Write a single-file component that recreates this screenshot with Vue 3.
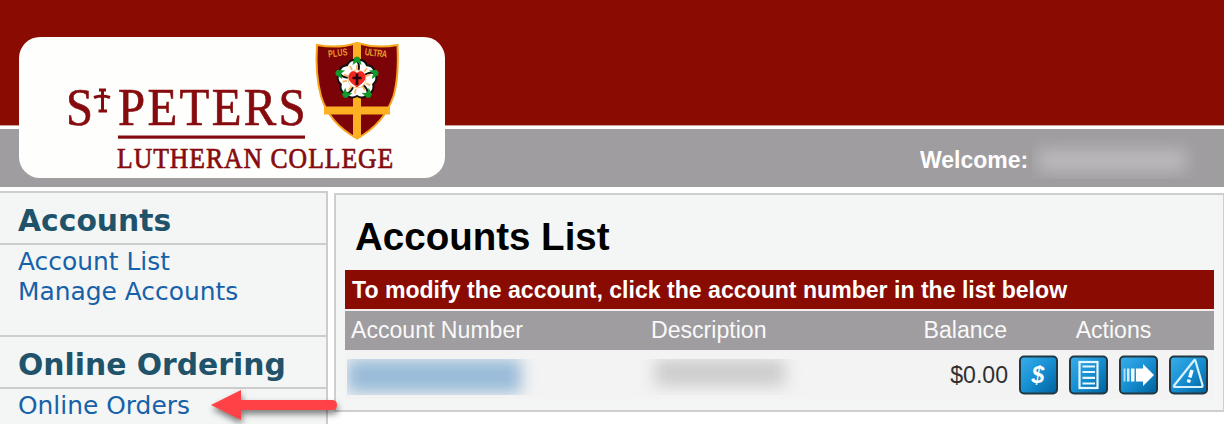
<script setup>
const sections = [
  { title: 'Accounts', links: ['Account List', 'Manage Accounts'] },
  { title: 'Online Ordering', links: ['Online Orders'] },
]
const actions = ['pay', 'statement', 'transfer', 'alert']
const petals = [0, 72, 144, 216, 288]
</script>

<template>
  <div class="page">
    <header class="header">
      <div class="band-red"></div>
      <div class="band-grey">
        <span class="welcome">Welcome:</span>
        <span class="redacted user"><i></i></span>
      </div>
      <div class="logo">
        <svg width="427" height="142" viewBox="19 37 427 142">
          <g class="brand">
            <text x="66" y="125" font-size="53" textLength="27" lengthAdjust="spacingAndGlyphs">S</text>
            <text transform="translate(118 125) scale(.92 1)" font-size="53" textLength="204">PETERS</text>
            <text transform="translate(117 167.500) scale(.9 1)" font-size="28.500" textLength="307">LUTHERAN COLLEGE</text>
          </g>
          <path d="M102.500 90V111M94 97.500Q102 94.500 110 97.500M99 90H106M98.500 111H107" fill="none" stroke="#860b0e" stroke-width="3" />
          <rect x="118" y="135.500" width="187" height="3.200" fill="#860b0e" />
          <path d="M317 45Q339 49 357 43Q377 49 397.500 45Q399 77 393.500 96Q384 124 357 138.500Q329 123 321 96Q315 74 317 45Z" fill="#7c0307" stroke="#f6a51d" stroke-width="2" />
          <path d="M357 43V138M324 110.500H390" stroke="#fcb022" stroke-width="8" />
          <text class="motto" transform="translate(328.500 57.500) rotate(-7) scale(.72 1)" font-size="10" textLength="27">PLUS</text>
          <text class="motto" transform="translate(364.500 55) rotate(7) scale(.72 1)" font-size="10" textLength="31">ULTRA</text>
          <g transform="translate(357 79)">
            <g v-for="a in petals" :key="'l' + a" :transform="`rotate(${a})`">
              <path d="M-4.500-15L-3-21Q0-24 3-21L4.500-15Z" fill="#11992c" />
            </g>
            <g v-for="a in petals" :key="a" :transform="`rotate(${a + 36})`">
              <path d="M0-3C-9-6-13-13-9-17Q-5-20 0-17Q5-20 9-17C13-13 9-6 0-3Z" fill="#fff" stroke="#111" stroke-width="2" />
            </g>
            <g v-for="a in petals" :key="'v' + a" :transform="`rotate(${a})`">
              <path d="M-4.500-14L-3-20Q0-22 3-20L4.500-14L0-17Z" fill="#11992c" />
              <path d="M0-9V-14M-5-9L-7-13" stroke="#f5b865" stroke-width="1.800" />
            </g>
            <circle r="9" fill="#fff" stroke="#f5c98a" />
            <path d="M0 8.500C-4 5-8.500 3-8.500-2C-8-8-2-9 0-6C2-9 8-8 8.500-2C8.500 3 4 5 0 8.500Z" fill="#f32622" />
            <path d="M0-5.500V6M-4.500-1H4.500" stroke="#24070a" stroke-width="2.700" />
          </g>
        </svg>
      </div>
    </header>

    <div class="body">
      <nav class="sidebar">
        <section v-for="s in sections" :key="s.title" class="section">
          <h2>{{ s.title }}</h2>
          <ul>
            <li v-for="l in s.links" :key="l"><a>{{ l }}</a></li>
          </ul>
        </section>
      </nav>

      <main class="panel">
        <h1>Accounts List</h1>
        <div class="notice"><span>To modify the account, click the account number in the list below</span></div>
        <div class="row head">
          <span>Account Number</span>
          <span>Description</span>
          <span class="right">Balance</span>
          <span class="center">Actions</span>
        </div>
        <div class="row entry">
          <span class="redacted number"><i></i></span>
          <span class="redacted desc"><i></i></span>
          <span class="right balance">$0.00</span>
          <div class="actions">
            <svg v-for="a in actions" :key="a" width="39" height="40" viewBox="0 0 39 40">
              <defs>
                <linearGradient :id="'g-' + a" x1="0" y1="0" x2="1" y2="1">
                  <stop offset="0" stop-color="#3aaeea" />
                  <stop offset=".5" stop-color="#168fd2" />
                  <stop offset="1" stop-color="#00609c" />
                </linearGradient>
              </defs>
              <rect x="1" y="1.500" width="37" height="37" rx="4" :fill="`url(#g-${a})`" stroke="#213843" stroke-width="2" />
              <text v-if="a === 'pay'" class="dollar" x="12.500" y="27.500" font-size="23">$</text>
              <g v-else-if="a === 'statement'" fill="none" stroke="#e8f7ff">
                <rect x="10.500" y="7" width="18" height="26" stroke-width="2.200" />
                <path d="M13.500 11.500H26M13.500 17H26M13.500 22.800H26M13.500 28.500H26" stroke-width="2.200" />
              </g>
              <g v-else-if="a === 'transfer'" fill="#fff">
                <path d="M17 13.500H24V9L35 20L24 31V26.500H17Z" />
                <path d="M12 13.500H15.500V26.500H12Z" opacity=".95" />
                <path d="M8 13.500H10.500V26.500H8Z" opacity=".8" />
                <path d="M4.500 13.500H6.500V26.500H4.500Z" opacity=".65" />
              </g>
              <g v-else fill="none" stroke="#d9f1fd">
                <path d="M25 5.500Q26 4 26.500 6L33.500 30Q34 32 32 32H6Q4 32 5.500 30Z" stroke-width="2.200" />
                <path d="M23 15L20.800 22.500" stroke="#fff" stroke-width="3.500" />
                <path d="M20.200 24.500L19.400 27.500" stroke="#fff" stroke-width="3.500" />
              </g>
            </svg>
          </div>
        </div>
      </main>
    </div>

    <svg class="pointer" width="140" height="50" viewBox="206 382 140 50">
      <path d="M211 405L241 390V400H332Q337 400 337 405T332 410H241V420Z" fill="#ff4245" />
    </svg>
  </div>
</template>

<style>
body { margin: 0; background: #fff; }
</style>

<style scoped>
.page {
  position: relative;
  width: 1226px;
  height: 424px;
  overflow: hidden;
  background: #fff;
  font-family: "Liberation Sans", Arial, sans-serif;
}
.header { position: relative; width: 1224px; }
.band-red { height: 125px; background: #8a0b02; border-bottom: 1px solid #cf9c98; }
.band-grey {
  display: flex;
  margin-top: 3px;
  height: 58px;
  box-sizing: border-box;
  padding-left: 920px;
  background: #a09da0;
}
.welcome { font-size: 23px; font-weight: bold; color: #fff; line-height: 62px; width: 112px; white-space: nowrap; }
.logo {
  position: absolute;
  left: 19px;
  top: 37px;
  width: 426px;
  height: 141px;
  border-radius: 21px;
  background: #fefefc;
}
.logo svg { display: block; }
.brand { fill: #860b0e; stroke: #860b0e; stroke-width: .7px; font-family: "Liberation Serif", serif; }
.motto { fill: #e99b28; font-family: "Liberation Sans", sans-serif; font-weight: bold; }

.redacted { display: flex; overflow: hidden; }
.redacted i { filter: blur(8px); }
.user { width: 168px; height: 43px; margin-top: 7px; padding: 13px 0 0 6px; box-sizing: border-box; }
.user i { height: 23px; width: 148px; background: #bbb9bb; }

.body { display: flex; align-items: flex-start; margin-top: 4px; }
.sidebar {
  width: 326px;
  height: 240px;
  border-right: 2px solid #ccc;
  background: #f4f6f6;
}
.section { border-top: 2px solid #cdcdcd; height: 142px; }
h2 {
  margin: 0;
  height: 50px;
  border-bottom: 2px solid #cdcdcd;
  padding-left: 18px;
  font: bold 29.8px/56px "DejaVu Sans", Verdana, sans-serif;
  color: #205369;
}
ul { list-style: none; margin: 0; padding: 2px 0 0 18px; }
li { font: 24.9px/30px "DejaVu Sans", Verdana, sans-serif; color: #1761a9; }

.panel {
  width: 887px;
  height: 215px;
  margin: 2px 0 0 6px;
  border: 2px solid #cecece;
  border-right-width: 1px;
  border-bottom-color: #cfcfcf;
  background: #f4f6f6;
  box-sizing: content-box;
}
h1 { margin: 0; height: 75px; padding-left: 19px; font-size: 38.5px; line-height: 84px; color: #000; }
.notice {
  margin-left: 9px;
  width: 869px;
  height: 39px;
  box-sizing: border-box;
  padding-left: 7px;
  background: #8a0b02;
  color: #fff;
  font-size: 23.08px;
  font-weight: bold;
  line-height: 40px;
  white-space: nowrap;
}
.row {
  display: grid;
  grid-template-columns: 300px 240px 116px 206px;
  margin-left: 9px;
  width: 869px;
  box-sizing: border-box;
  padding-left: 6px;
  font-size: 23.1px;
}
.head { height: 41px; border-top: 2px solid #f4eeee; background: #a09da0; color: #f9f9f9; line-height: 38px; }
.right { text-align: right; }
.center { text-align: center; padding-left: 7px; }
.entry { height: 49px; background: #f3f3f3; }
.balance { line-height: 50px; padding-left: 1px; margin-right: -1px; color: #303030; }
.actions { display: flex; gap: 11px; padding: 5px 0 0 12px; }
.dollar { fill: #fff; font-family: "Liberation Sans", sans-serif; font-weight: bold; font-style: italic; }
.number { width: 210px; height: 36px; margin: 9px 0 0 -4px; }
.number i { width: 174px; height: 34px; background: #98bbd8; }
.desc { width: 172px; height: 36px; margin: 9px 0 0 -12px; padding: 0 16px; box-sizing: border-box; }
.desc i { width: 130px; height: 27px; background: #cbcccb; }

.pointer { position: absolute; left: 206px; top: 382px; filter: drop-shadow(1px 4px 3px rgba(0, 0, 0, .5)); }
</style>
